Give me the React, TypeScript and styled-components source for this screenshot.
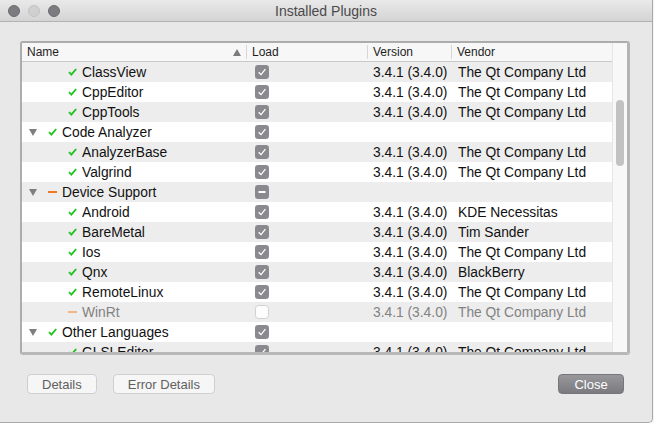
import * as React from 'react';
import styled, {createGlobalStyle} from 'styled-components';

const GlobalStyle = createGlobalStyle`
  html, body {
    margin: 0;
    padding: 0;
    background: #f3f3f3;
  }
  body {
    font-family: "Liberation Sans", Arial, Helvetica, sans-serif;
    -webkit-font-smoothing: antialiased;
  }
`;

const Window = styled.div`
  width: 652px;
  height: 422px;
  background: #e8e8e8;
  border-right: 1px solid #a9a9a9;
  border-bottom: 1px solid #a9a9a9;
  border-bottom-right-radius: 5px;
  display: flex;
  flex-direction: column;
  overflow: hidden;
`;

const TitleBar = styled.div`
  height: 21px;
  flex-shrink: 0;
  display: grid;
  grid-template-columns: 80px 1fr 80px;
  align-items: center;
  background: linear-gradient(#e9e9e9, #d4d4d4);
  border-bottom: 1px solid #b2b2b2;
`;

const Lights = styled.div`
  display: flex;
  gap: 8px;
  padding-left: 8px;
  padding-top: 1px;
`;

const Light = styled.span<{$dim?: boolean}>`
  width: 12px;
  height: 12px;
  border-radius: 50%;
  box-sizing: border-box;
  background: ${p => (p.$dim ? '#d0d0d0' : '#7c7c80')};
  border: 1px solid ${p => (p.$dim ? '#c2c2c2' : '#6c6c70')};
`;

const Title = styled.div`
  text-align: center;
  font-size: 14px;
  color: #4a4a4a;
`;

const Body = styled.div`
  flex: 1;
  display: flex;
  flex-direction: column;
  padding: 19px 22px 0 20px;
`;

const Frame = styled.div`
  height: 314px;
  box-sizing: border-box;
  border-style: solid;
  border-width: 2px 3px 3px 2px;
  border-color: #acacac #b4b4b4 #b8b8b8 #acacac;
  border-radius: 3px;
  background: #fff;
  display: flex;
  overflow: hidden;
`;

const TableArea = styled.div`
  flex: 1;
  display: flex;
  flex-direction: column;
  overflow: hidden;
`;

const COLS = '225px 121px 84px 1fr';

const HeaderRow = styled.div`
  height: 19px;
  flex-shrink: 0;
  box-sizing: border-box;
  display: grid;
  grid-template-columns: ${COLS};
  background: #f7f7f7;
  border-bottom: 1px solid #c9c9c9;
  font-size: 12px;
  color: #1e1e1e;
`;

const HeaderCell = styled.div<{$last?: boolean}>`
  display: flex;
  align-items: center;
  justify-content: space-between;
  padding: 0 5px;
  border-right: ${p => (p.$last ? 'none' : '1px solid #d6d6d6')};
  margin: 2px 0;
`;

const SortArrow = styled.span`
  width: 0;
  height: 0;
  border-left: 4.5px solid transparent;
  border-right: 4.5px solid transparent;
  border-bottom: 7px solid #7b7b7b;
`;

const Row = styled.div<{$odd: boolean; $off?: boolean}>`
  height: 20px;
  flex-shrink: 0;
  display: grid;
  grid-template-columns: ${COLS};
  align-items: center;
  background: ${p => (p.$odd ? '#ededed' : '#ffffff')};
  font-size: 13.8px;
  color: ${p => (p.$off ? '#828282' : '#111')};
  white-space: nowrap;
`;

const NameCell = styled.div<{$level: number}>`
  display: flex;
  align-items: center;
  padding-left: ${p => 7 + p.$level * 20}px;
`;

const ExpandSlot = styled.span`
  width: 19px;
  display: flex;
  align-items: center;
`;

const Expander = styled.span`
  width: 0;
  height: 0;
  border-left: 4.5px solid transparent;
  border-right: 4.5px solid transparent;
  border-top: 7px solid #7e7e7e;
  margin-top: 1px;
`;

const StatusSlot = styled.span`
  width: 14px;
  display: flex;
  align-items: center;
`;

const Dash = styled.span<{$faded?: boolean}>`
  width: 9px;
  height: 2px;
  background: ${p => (p.$faded ? '#f6b483' : '#f07a1f')};
`;

const LoadCell = styled.div`
  display: flex;
  align-items: center;
  padding-left: 8px;
`;

const TextCell = styled.div<{$pad: number}>`
  padding-left: ${p => p.$pad}px;
  overflow: hidden;
`;

const ScrollTrack = styled.div`
  width: 14px;
  flex-shrink: 0;
  background: #f8f8f8;
  border-left: 1px solid #e6e6e6;
  display: flex;
  justify-content: center;
`;

const Thumb = styled.div`
  width: 8px;
  height: 66px;
  margin-top: 57px;
  border-radius: 4px;
  background: #c2c2c2;
`;

const ButtonBar = styled.div`
  display: flex;
  align-items: center;
  gap: 16px;
  padding: 19px 6px 0 7px;
`;

const Button = styled.div<{$primary?: boolean}>`
  height: 20px;
  min-width: ${p => (p.$primary ? '66px' : '0')};
  box-sizing: border-box;
  padding: 0 14px;
  display: flex;
  align-items: center;
  justify-content: center;
  border-radius: 4px;
  font-size: 13px;
  color: ${p => (p.$primary ? '#fff' : '#606060')};
  background: ${p => (p.$primary ? 'linear-gradient(#98979c, #7b7a7f)' : '#f6f6f6')};
  border: 1px solid ${p => (p.$primary ? '#77767b' : '#cfcfcf')};
`;

const Spacer = styled.div`
  flex: 1;
`;

const GreenCheck = () => (
  <svg width="9" height="8" viewBox="0 0 9 8">
    <path d="M1 4.2 L3.4 6.6 L8.2 1" fill="none" stroke="#1fc41f" strokeWidth="1.9" />
  </svg>
);

type Load = 'on' | 'off' | 'partial';

const LoadBox = ({state}: {state: Load}) => (
  <svg width="14" height="14" viewBox="0 0 14 14">
    {state === 'off' ? (
      <rect x="0.5" y="0.5" width="13" height="13" rx="3" fill="#fdfdfd" stroke="#cfcfcf" />
    ) : (
      <rect x="0" y="0" width="14" height="14" rx="3.2" fill="#8a898e" />
    )}
    {state === 'on' && (
      <path d="M3.6 7.2 L6 9.6 L10.4 4.2" fill="none" stroke="#fff" strokeWidth="1.3" />
    )}
    {state === 'partial' && <rect x="3.5" y="6" width="7" height="2" fill="#fff" />}
  </svg>
);

type Plugin = {
  name: string;
  level: number;
  status: 'ok' | 'partial' | 'faded';
  load: Load;
  version?: string;
  vendor?: string;
};

const V = '3.4.1 (3.4.0)';
const QT = 'The Qt Company Ltd';

const plugins: Plugin[] = [
  {name: 'ClassView', level: 1, status: 'ok', load: 'on', version: V, vendor: QT},
  {name: 'CppEditor', level: 1, status: 'ok', load: 'on', version: V, vendor: QT},
  {name: 'CppTools', level: 1, status: 'ok', load: 'on', version: V, vendor: QT},
  {name: 'Code Analyzer', level: 0, status: 'ok', load: 'on'},
  {name: 'AnalyzerBase', level: 1, status: 'ok', load: 'on', version: V, vendor: QT},
  {name: 'Valgrind', level: 1, status: 'ok', load: 'on', version: V, vendor: QT},
  {name: 'Device Support', level: 0, status: 'partial', load: 'partial'},
  {name: 'Android', level: 1, status: 'ok', load: 'on', version: V, vendor: 'KDE Necessitas'},
  {name: 'BareMetal', level: 1, status: 'ok', load: 'on', version: V, vendor: 'Tim Sander'},
  {name: 'Ios', level: 1, status: 'ok', load: 'on', version: V, vendor: QT},
  {name: 'Qnx', level: 1, status: 'ok', load: 'on', version: V, vendor: 'BlackBerry'},
  {name: 'RemoteLinux', level: 1, status: 'ok', load: 'on', version: V, vendor: QT},
  {name: 'WinRt', level: 1, status: 'faded', load: 'off', version: V, vendor: QT},
  {name: 'Other Languages', level: 0, status: 'ok', load: 'on'},
  {name: 'GLSLEditor', level: 1, status: 'ok', load: 'on', version: V, vendor: QT},
];

export default function App() {
  return (
    <Window>
      <GlobalStyle />
      <TitleBar>
        <Lights>
          <Light />
          <Light $dim />
          <Light />
        </Lights>
        <Title>Installed Plugins</Title>
        <div />
      </TitleBar>
      <Body>
        <Frame>
          <TableArea>
            <HeaderRow>
              <HeaderCell>
                Name
                <SortArrow />
              </HeaderCell>
              <HeaderCell>Load</HeaderCell>
              <HeaderCell>Version</HeaderCell>
              <HeaderCell $last>Vendor</HeaderCell>
            </HeaderRow>
            {plugins.map((p, i) => (
              <Row key={p.name} $odd={i % 2 === 0} $off={p.status === 'faded'}>
                <NameCell $level={p.level}>
                  <ExpandSlot>{p.level === 0 && <Expander />}</ExpandSlot>
                  <StatusSlot>
                    {p.status === 'ok' ? <GreenCheck /> : <Dash $faded={p.status === 'faded'} />}
                  </StatusSlot>
                  {p.name}
                </NameCell>
                <LoadCell>
                  <LoadBox state={p.load} />
                </LoadCell>
                <TextCell $pad={5}>{p.version}</TextCell>
                <TextCell $pad={6}>{p.vendor}</TextCell>
              </Row>
            ))}
          </TableArea>
          <ScrollTrack>
            <Thumb />
          </ScrollTrack>
        </Frame>
        <ButtonBar>
          <Button>Details</Button>
          <Button>Error Details</Button>
          <Spacer />
          <Button $primary>Close</Button>
        </ButtonBar>
      </Body>
    </Window>
  );
}
